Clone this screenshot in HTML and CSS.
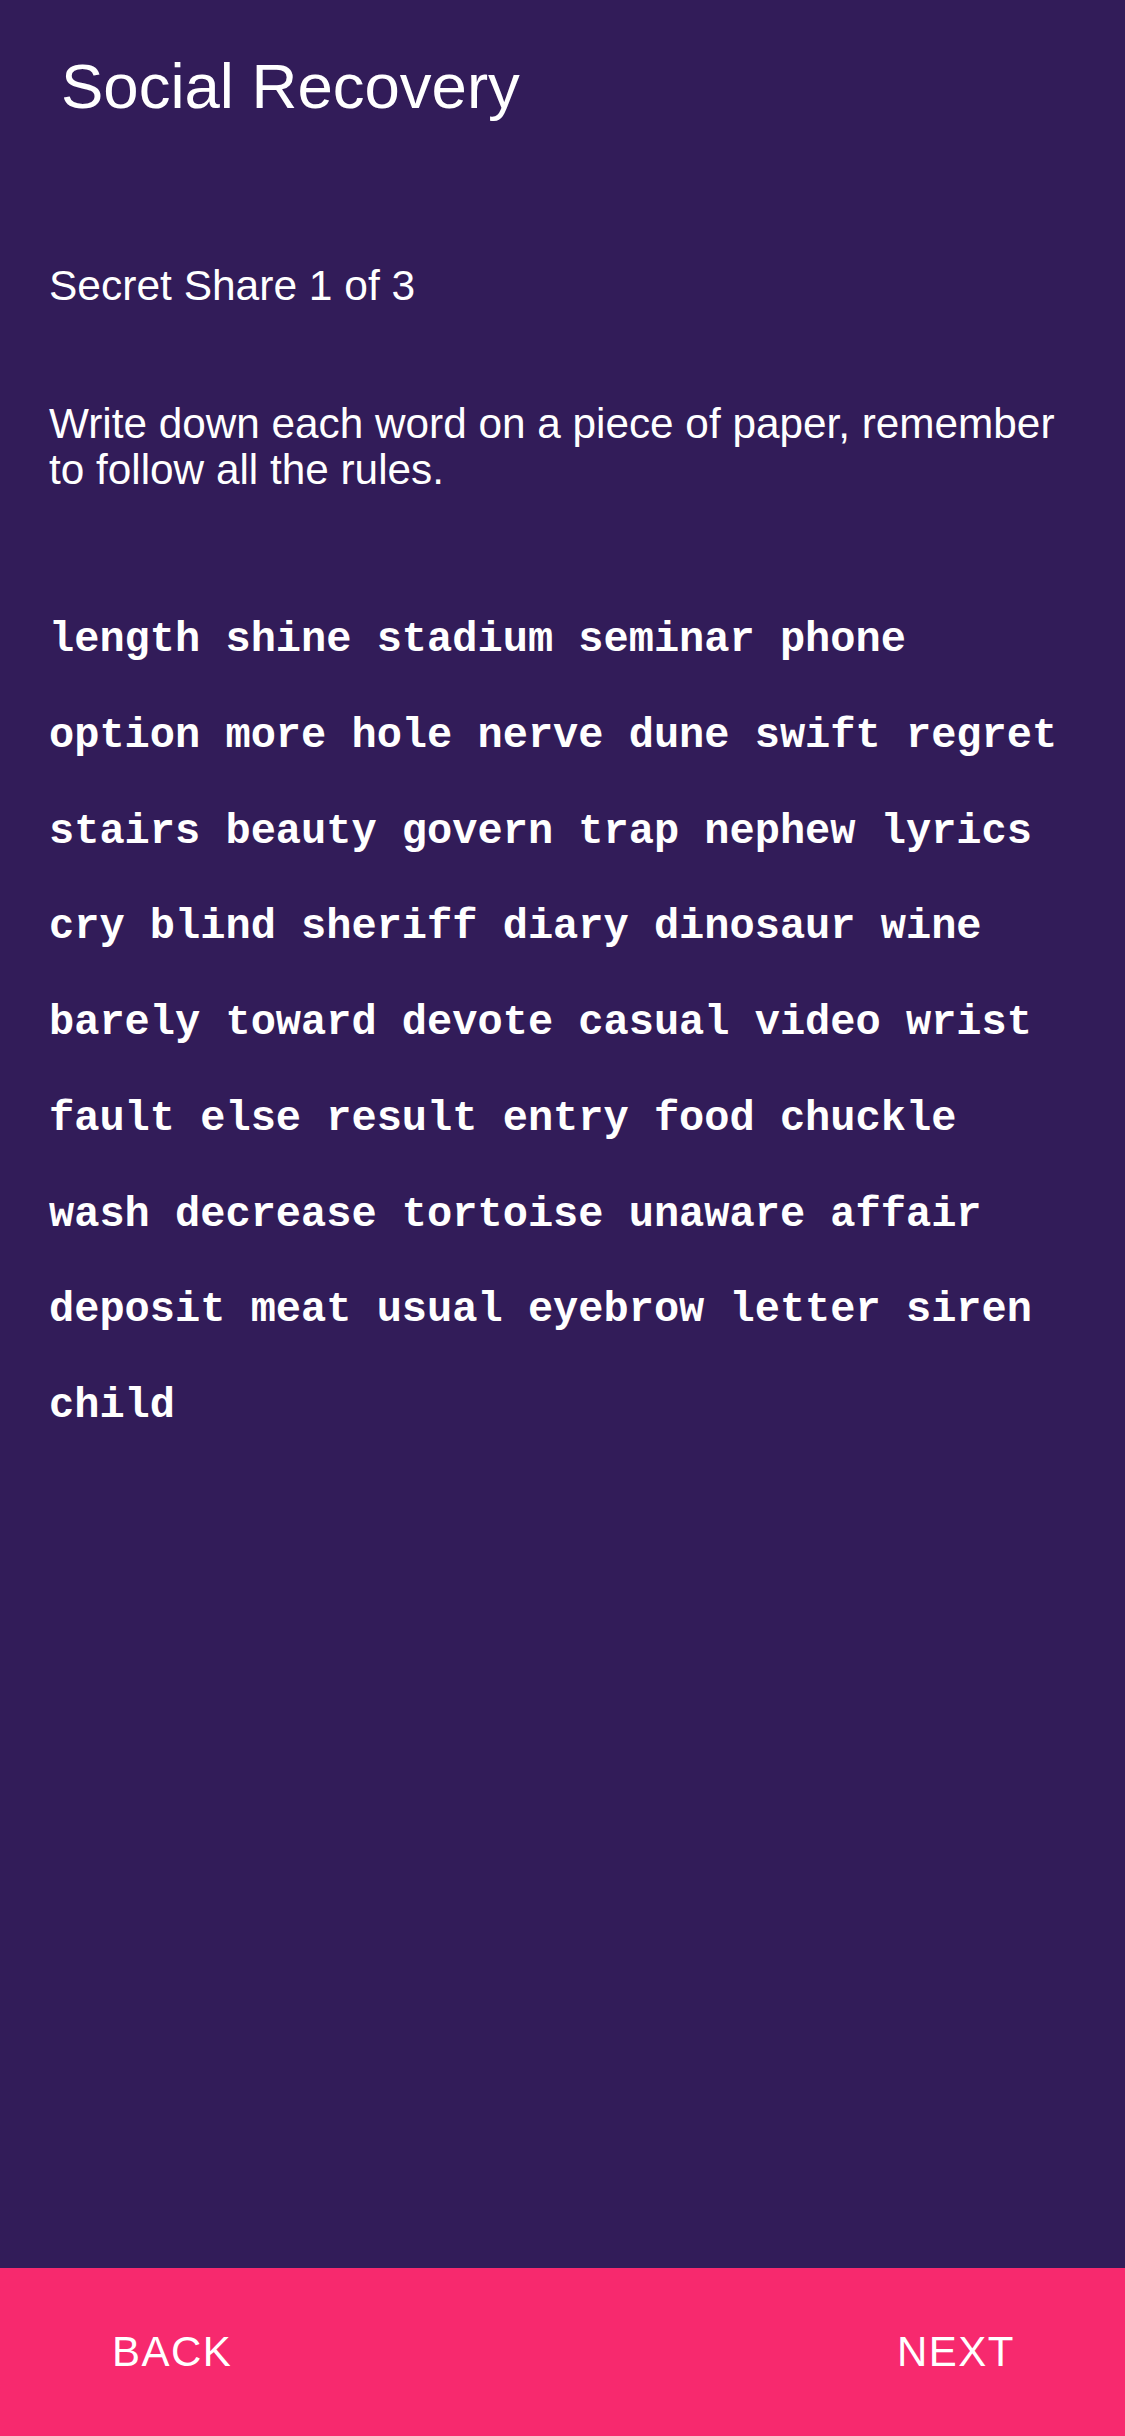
FILE: index.html
```html
<!DOCTYPE html>
<html lang="en">
<head>
<meta charset="utf-8">
<title>Social Recovery</title>
<link rel="stylesheet" href="styles.css">
</head>
<body>
<div class="screen">
  <main class="content">
    <h1 class="title">Social Recovery</h1>
    <h2 class="share">Secret Share 1 of 3</h2>
    <p class="intro">Write down each word on a piece of paper, remember to follow all the rules.</p>
    <p class="words">length shine stadium seminar phone option more hole nerve dune swift regret stairs beauty govern trap nephew lyrics cry blind sheriff diary dinosaur wine barely toward devote casual video wrist fault else result entry food chuckle wash decrease tortoise unaware affair deposit meat usual eyebrow letter siren child</p>
  </main>
  <footer class="actions">
    <button class="action">BACK</button>
    <button class="action">NEXT</button>
  </footer>
</div>
</body>
</html>
```
FILE: styles.css
```css
* { box-sizing: border-box; }
html, body {
  margin: 0;
  padding: 0;
  background: #321c59;
}
.screen {
  min-height: 2436px;
  display: flex;
  flex-direction: column;
  color: #ffffff;
  font-family: "Liberation Sans", Arial, sans-serif;
}
.content {
  flex: 1;
  padding: 46px 49px 0 49px;
}
.title {
  margin: 0 0 0 12px;
  font-size: 63.5px;
  font-weight: 400;
  line-height: 80px;
}
.share {
  margin: 134px 0 0 0;
  font-size: 42.5px;
  font-weight: 400;
  line-height: 52px;
}
.intro {
  margin: 89px 0 0 0;
  font-size: 42.3px;
  line-height: 46px;
}
.words {
  margin: 100px 0 0 0;
  font-family: "Liberation Mono", "Courier New", monospace;
  font-weight: 700;
  font-size: 42px;
  line-height: 95.75px;
}
.actions {
  height: 168px;
  background: #f7296e;
  display: flex;
  justify-content: space-between;
  align-items: center;
  padding: 0 110px 0 112px;
}
.action {
  background: none;
  border: 0;
  padding: 0;
  color: #ffffff;
  font-family: "Liberation Sans", Arial, sans-serif;
  font-size: 42px;
  letter-spacing: 1.5px;
}
```
